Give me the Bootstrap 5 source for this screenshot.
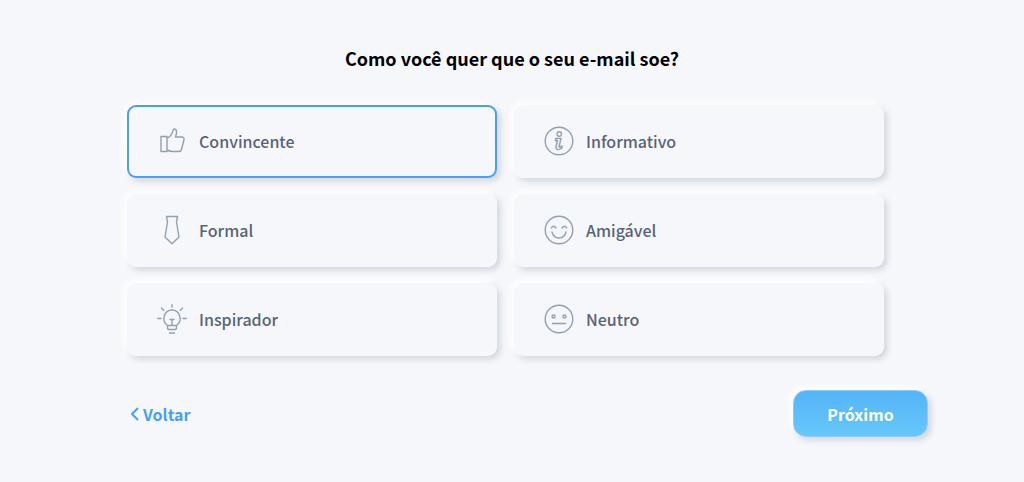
<!DOCTYPE html>
<html lang="pt-BR">
<head>
<meta charset="utf-8">
<meta name="viewport" content="width=device-width, initial-scale=1">
<title>Tom do e-mail</title>
<link href="https://cdn.jsdelivr.net/npm/bootstrap@5.3.0/dist/css/bootstrap.min.css" rel="stylesheet">
<style>
  body { background: #f6f7fb; font-family: "Noto Sans CJK SC", "Noto Sans", sans-serif; }
  .wizard { max-width: 832px; padding-top: 43px; padding-bottom: 32px; }
  .wizard-title { font-size: 18px; line-height: 30px; font-weight: 700; color: #000; margin-bottom: 32px; }
  .tone-grid { display: grid; grid-template-columns: repeat(2, minmax(0, 1fr)); gap: 16px 17px; margin: 0 44px 0 31px; }
  .tone-option {
    height: 73px; padding: 0 28px 2px; gap: 12px; border-radius: 9px; cursor: pointer;
    border: 2px solid transparent; background: #f6f7fb; color: #596377;
    font-size: 16px; line-height: 24px; font-weight: 500;
    box-shadow: -3px -3px 6px #fff, 3px 3px 6px #cdd3dc;
  }
  .btn-check:checked + .tone-option { border-color: #4a9ff5; }
  .btn-check:focus-visible + .tone-option { outline: 2px solid #4a9ff5; }
  .tone-option svg { width: 30px; height: 30px; fill: none; stroke: #91a1b0; stroke-width: 1.4; stroke-linejoin: round; stroke-linecap: round; }
  .wizard-actions { margin: 34px 0 0 34px; }
  .back-link { color: #4a9ff5; font-size: 16px; line-height: 24px; font-weight: 700; gap: 4px; }
  .next-btn, .next-btn:hover {
    width: 135px; height: 47px; border: 1px solid #8fcbf8; border-radius: 13px; color: #fff;
    font-size: 16px; line-height: 24px; font-weight: 700;
    background: linear-gradient(#53b4f8, #67c8f9) border-box;
    box-shadow: -3px -3px 6px #fff, 3px 3px 6px #cdd3dc;
  }
</style>
</head>
<body>
<main class="container-fluid wizard px-0">
  <form>
    <h1 class="wizard-title text-center" id="question">Como você quer que o seu e-mail soe?</h1>
    <div class="tone-grid" role="radiogroup" aria-labelledby="question">
      <div>
        <input class="btn-check" type="radio" name="tone" id="t1" checked>
        <label class="tone-option d-flex align-items-center" for="t1">
          <svg viewBox="0 0 30 30" aria-hidden="true"><path d="M4 10.500H10V25.500H4ZM10 12C13 11.500 14.500 8.500 15.500 6L16 4.500C16.500 2.500 19 2.500 19.500 5C20 7.500 19 9 18.500 11H24.500Q27.500 11 27 13.500L24.500 23.500Q24 25.500 22 25.500H16Q13 25.500 10 24"/></svg>
          <span>Convincente</span>
        </label>
      </div>
      <div>
        <input class="btn-check" type="radio" name="tone" id="t2">
        <label class="tone-option d-flex align-items-center" for="t2">
          <svg viewBox="0 0 30 30" aria-hidden="true"><circle cx="15" cy="15" r="13.800"/><circle cx="15.300" cy="8" r="2.200"/><path d="M11.500 12.500H17L15 20.500Q14.900 21.500 16 21L18 20V22Q15.500 24 13.500 23.500Q11.500 23 12 20.500L13.500 14.800H11.500Z"/></svg>
          <span>Informativo</span>
        </label>
      </div>
      <div>
        <input class="btn-check" type="radio" name="tone" id="t3">
        <label class="tone-option d-flex align-items-center" for="t3">
          <svg viewBox="0 0 30 30" aria-hidden="true"><path d="M9.500 1.500H20.500L19.500 7L22 22L15 28.800L8 22L10.500 7Z"/></svg>
          <span>Formal</span>
        </label>
      </div>
      <div>
        <input class="btn-check" type="radio" name="tone" id="t4">
        <label class="tone-option d-flex align-items-center" for="t4">
          <svg viewBox="0 0 30 30" aria-hidden="true"><circle cx="15" cy="15" r="13.800"/><path d="M7.300 13Q9.500 9.500 12 13M18 13Q20.500 9.500 22.700 13M8 17C10 25 20 25 22 17"/></svg>
          <span>Amigável</span>
        </label>
      </div>
      <div>
        <input class="btn-check" type="radio" name="tone" id="t5">
        <label class="tone-option d-flex align-items-center" for="t5">
          <svg viewBox="0 0 30 30" aria-hidden="true"><path d="M10.500 24V21.500C4 17 7 6 15 6S26 17 19.500 21.500V24Q19.500 25.500 18 25.500H12Q10.500 25.500 10.500 24M10.500 21.500H19.500M15 21.500V15.500M13 15.500H17M12.500 29H17.500M15 .700V3M.700 14.500H4M26 14.500H29.300M4.500 4L6.800 6.300M25.500 4L23.200 6.300"/></svg>
          <span>Inspirador</span>
        </label>
      </div>
      <div>
        <input class="btn-check" type="radio" name="tone" id="t6">
        <label class="tone-option d-flex align-items-center" for="t6">
          <svg viewBox="0 0 30 30" aria-hidden="true"><circle cx="15" cy="15" r="13.800"/><circle cx="9.500" cy="12.500" r="1.500"/><circle cx="20.500" cy="12.500" r="1.500"/><path d="M8.500 19.500H21.500"/></svg>
          <span>Neutro</span>
        </label>
      </div>
    </div>
    <div class="wizard-actions d-flex justify-content-between align-items-center">
      <a class="back-link d-flex align-items-center text-decoration-none" href="#">
        <svg width="9" height="14" viewBox="0 0 9 14" fill="none" stroke="currentColor" stroke-width="2" aria-hidden="true"><path d="M8 1L2 7L8 13"/></svg>
        Voltar
      </a>
      <button class="btn next-btn p-0" type="button">Próximo</button>
    </div>
  </form>
</main>
<script src="https://cdn.jsdelivr.net/npm/bootstrap@5.3.0/dist/js/bootstrap.bundle.min.js"></script>
</body>
</html>
